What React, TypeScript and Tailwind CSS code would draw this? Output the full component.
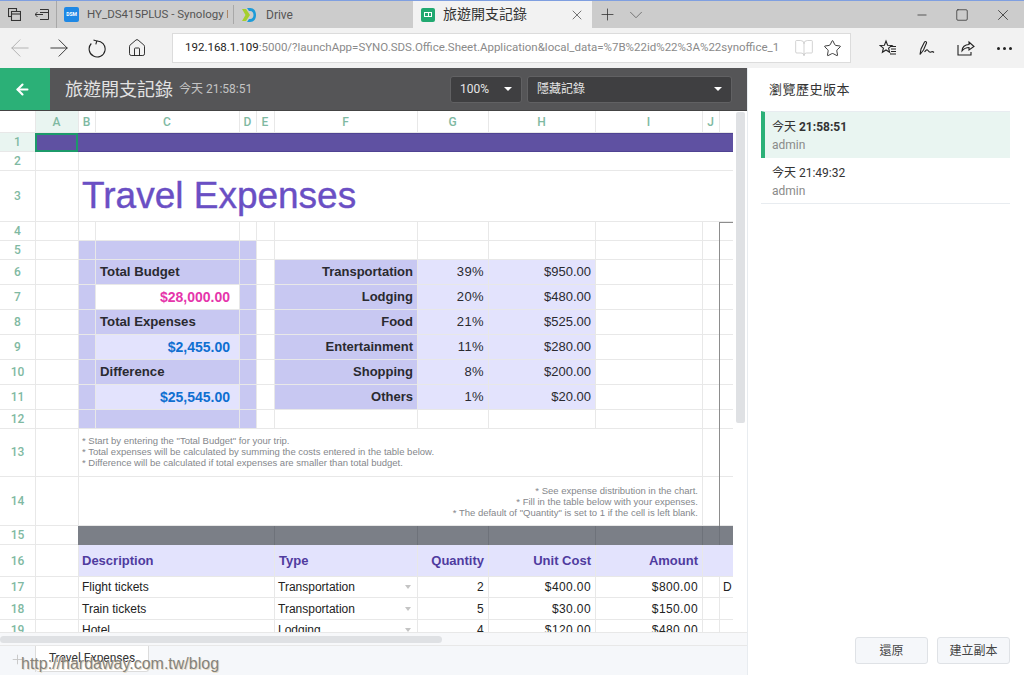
import type { ReactNode } from 'react';
import { ArrowLeft, ArrowRight, BookOpen, ChevronDown, House, Minus, Plus, Square, Star, X } from 'lucide-react';

const sans = "font-['Liberation_Sans','Noto_Sans_CJK_TC',sans-serif]";
const ui = "font-['Roboto','Noto_Sans_CJK_TC',sans-serif]";
const rowGrid =
  'grid grid-cols-[35px_43px_17px_144px_17px_18px_143px_71px_107px_107px_17px_14px] w-[733px]';

function Cell({ className = '', children }: { className?: string; children?: ReactNode }) {
  return (
    <div className={`min-w-0 overflow-hidden whitespace-nowrap flex items-center border-l border-b border-[#e8e8e8] ${className}`}>
      {children}
    </div>
  );
}

function RowHead({ n, active }: { n: number; active?: boolean }) {
  return (
    <div className={`flex items-center justify-center border-b border-[#e8e8e8] text-[12px] font-medium text-[#7fb9a2] ${ui} ${active ? 'bg-[#e9f5f1]' : ''}`}>
      {n}
    </div>
  );
}

const colLetters = ['A', 'B', 'C', 'D', 'E', 'F', 'G', 'H', 'I', 'J', ''];

const dark = 'bg-[#c8c8f2] border-[#bebee8]';
const light = 'bg-[#e3e3fd] border-[#d6d6f2]';
const band = 'bg-[#7b7f87] border-l border-[#6e727a]';

// budget block on the left, category table on the right
const budgetRows: { label?: string; value?: string; valueClass?: string; bg?: string; cat: string; pct: string; cost: string }[] = [
  { label: 'Total Budget', cat: 'Transportation', pct: '39%', cost: '$950.00' },
  { value: '$28,000.00', valueClass: 'text-[#e535ab]', bg: 'bg-white border-[#e8e8e8]', cat: 'Lodging', pct: '20%', cost: '$480.00' },
  { label: 'Total Expenses', cat: 'Food', pct: '21%', cost: '$525.00' },
  { value: '$2,455.00', valueClass: 'text-[#0f6fd1]', bg: light, cat: 'Entertainment', pct: '11%', cost: '$280.00' },
  { label: 'Difference', cat: 'Shopping', pct: '8%', cost: '$200.00' },
  { value: '$25,545.00', valueClass: 'text-[#0f6fd1]', bg: light, cat: 'Others', pct: '1%', cost: '$20.00' },
];

const expenses = [
  { h: 'h-[21px]', n: 17, d: 'Flight tickets', t: 'Transportation', q: '2', u: '$400.00', a: '$800.00', x: 'D' },
  { h: 'h-[22px]', n: 18, d: 'Train tickets', t: 'Transportation', q: '5', u: '$30.00', a: '$150.00', x: '' },
  { h: 'h-[21px]', n: 19, d: 'Hotel', t: 'Lodging', q: '4', u: '$120.00', a: '$480.00', x: '' },
];

function Sheet() {
  return (
    <div className={`h-[521px] overflow-hidden ${sans} text-[#2a2a30]`}>
      {/* column letters */}
      <div className={`${rowGrid} h-[22px]`}>
        <div className="border-b border-[#e8e8e8]" />
        {colLetters.map((c, i) => (
          <div
            key={i}
            className={`flex items-center justify-center pr-[1px] border-l border-b border-[#e8e8e8] text-[12px] font-medium text-[#7fb9a2] ${ui} ${c === 'A' ? 'bg-[#e9f5f1]' : ''}`}
          >
            {c}
          </div>
        ))}
      </div>

      <div className={`${rowGrid} h-[19px]`}>
        <RowHead n={1} active />
        <div className="bg-[#5f51a2] border-2 border-[#1c9a6a]" />
        <div className="col-span-10 bg-[#5f51a2] border-y border-[#4f4392]" />
      </div>
      <div className={`${rowGrid} h-[18px]`}>
        <RowHead n={2} />
        <Cell />
        <Cell className="col-span-10" />
      </div>
      <div className={`${rowGrid} h-[52px]`}>
        <RowHead n={3} />
        <Cell />
        <Cell className="col-span-10 pl-[3px] text-[37px] text-[#6a4fc4] [-webkit-text-stroke:0.4px_#6a4fc4]">Travel Expenses</Cell>
      </div>
      <div className={`${rowGrid} h-[19px]`}>
        <RowHead n={4} />
        {colLetters.map((c, i) => (
          <Cell key={i} />
        ))}
      </div>
      <div className={`${rowGrid} h-[19px]`}>
        <RowHead n={5} />
        <Cell />
        <Cell className={dark} />
        <Cell className={dark} />
        <Cell className={dark} />
        <Cell />
        <Cell />
        <Cell />
        <Cell />
        <Cell />
        <Cell />
        <Cell />
      </div>

      {budgetRows.map((r, i) => (
        <div key={i} className={`${rowGrid} h-[25px]`}>
          <RowHead n={6 + i} />
          <Cell />
          <Cell className={dark} />
          {r.label ? (
            <Cell className={`${dark} pl-[4px] text-[13.2px] font-bold`}>{r.label}</Cell>
          ) : (
            <Cell className={`${r.bg} justify-end pr-[9px] text-[14px] font-bold ${r.valueClass}`}>{r.value}</Cell>
          )}
          <Cell className={dark} />
          <Cell />
          <Cell className={`${dark} justify-end pr-[4px] text-[13px] font-bold`}>{r.cat}</Cell>
          <Cell className={`${light} justify-end pr-[4px] text-[13px] tracking-[0.4px]`}>{r.pct}</Cell>
          <Cell className={`${light} justify-end pr-[4px] text-[13px]`}>{r.cost}</Cell>
          <Cell />
          <Cell />
          <Cell />
        </div>
      ))}

      <div className={`${rowGrid} h-[18px]`}>
        <RowHead n={12} />
        <Cell />
        <Cell className={dark} />
        <Cell className={dark} />
        <Cell className={dark} />
        <Cell />
        <Cell />
        <Cell />
        <Cell />
        <Cell />
        <Cell />
        <Cell />
      </div>
      <div className={`${rowGrid} h-[49px]`}>
        <RowHead n={13} />
        <Cell />
        <Cell className="col-span-8 pl-[3px] text-[9.5px] leading-[11px] text-[#85878c]">
          <div className="pb-[2px]">
            <div>* Start by entering the "Total Budget" for your trip.</div>
            <div>* Total expenses will be calculated by summing the costs entered in the table below.</div>
            <div>* Difference will be calculated if total expenses are smaller than total budget.</div>
          </div>
        </Cell>
        <Cell />
        <Cell />
      </div>
      <div className={`${rowGrid} h-[49px]`}>
        <RowHead n={14} />
        <Cell />
        <Cell className="col-span-8 justify-end pr-[4px] text-[9.5px] leading-[11px] text-[#85878c] text-right">
          <div className="pt-[1px]">
            <div>* See expense distribution in the chart.</div>
            <div>* Fill in the table below with your expenses.</div>
            <div>* The default of "Quantity" is set to 1 if the cell is left blank.</div>
          </div>
        </Cell>
        <Cell />
        <Cell />
      </div>
      <div className={`${rowGrid} h-[19px]`}>
        <RowHead n={15} />
        <Cell />
        <div className="col-span-4 bg-[#7b7f87]" />
        <div className={band} />
        <div className={band} />
        <div className={band} />
        <div className={band} />
        <div className={band} />
        <div className={band} />
      </div>
      <div className={`${rowGrid} h-[32px] text-[13px] font-bold text-[#4f3b9f]`}>
        <RowHead n={16} />
        <Cell />
        <Cell className={`col-span-4 ${light} pl-[3px]`}>Description</Cell>
        <Cell className={`${light} pl-[4px]`}>Type</Cell>
        <Cell className={`${light} justify-end pr-[4px]`}>Quantity</Cell>
        <Cell className={`${light} justify-end pr-[4px]`}>Unit Cost</Cell>
        <Cell className={`${light} justify-end pr-[4px]`}>Amount</Cell>
        <Cell className={`col-span-2 ${light}`} />
      </div>
      {expenses.map((r) => (
        <div key={r.n} className={`${rowGrid} ${r.h} text-[12px] text-[#222]`}>
          <RowHead n={r.n} />
          <Cell />
          <Cell className="col-span-4 pl-[3px]">{r.d}</Cell>
          <Cell className="pl-[3px] justify-between pr-[6px]">
            <span>{r.t}</span>
            <span className="border-x-[3.5px] border-t-[4px] border-x-transparent border-t-[#c4c4c4]" />
          </Cell>
          <Cell className="justify-end pr-[4px] tracking-[0.4px]">{r.q}</Cell>
          <Cell className="justify-end pr-[4px] tracking-[0.4px]">{r.u}</Cell>
          <Cell className="justify-end pr-[4px] tracking-[0.4px]">{r.a}</Cell>
          <Cell />
          <Cell className="pl-[3px]">{r.x}</Cell>
        </div>
      ))}
    </div>
  );
}

function ToolButton({ children }: { children: ReactNode }) {
  return <div className="w-[39px] flex items-center justify-center">{children}</div>;
}

function BrowserChrome() {
  return (
    <>
      {/* tab strip */}
      <div className={`h-[28px] shrink-0 flex items-stretch bg-[#cccccc] border-t border-[#7f9fe0] text-[12px] text-[#555] ${ui}`}>
        <div className="w-[57px] flex items-center gap-[14px] pl-[8px] border-r border-[#a8a8a8] text-[#333]">
          <svg width="13" height="13" viewBox="0 0 13 13" fill="none" stroke="currentColor" strokeWidth="1.1">
            <rect x="0.5" y="0.5" width="8" height="8" />
            <rect x="3.5" y="3.5" width="9" height="9" fill="#ccc" />
            <path d="M3.5 6h9" />
          </svg>
          <svg width="14" height="11" viewBox="0 0 14 11" fill="none" stroke="currentColor" strokeWidth="1">
            <path d="M5 .5h8.500v10H5M5 3.500h8.500M0 5.500h8M2.500 3 0 5.500 2.500 8" />
          </svg>
        </div>
        <div className="w-[177px] flex items-center pl-[7px] border-r border-[#a8a8a8] my-[4px]">
          <span className="w-[15px] h-[15px] rounded-[2px] bg-[#1e88e5] text-white text-[5px] font-bold flex items-center justify-center shrink-0">DSM</span>
          <span className="ml-[8px] w-[141px] overflow-hidden whitespace-nowrap text-[11.5px]">HY_DS415PLUS - Synology DiskStation</span>
        </div>
        <div className="w-[179px] flex items-center pl-[7px]">
          <svg width="16" height="16" viewBox="0 0 16 16">
            <path d="M1 2h4l4 6-4 6H1l3.500-6z" fill="#a5cf2f" />
            <path d="M6 1h3c4 0 6 3 6 7s-2 7-6 7H6l2-3h1c2.500 0 3.500-2 3.500-4S11.500 4 9 4H8z" fill="#1d9bd8" />
          </svg>
          <span className="ml-[9px]">Drive</span>
        </div>
        <div className="w-[179px] bg-[#f2f2f2] flex items-center pl-[8px] text-[#333]">
          <span className="w-[14px] h-[14px] rounded-[2px] bg-[#21a971] flex items-center justify-center shrink-0">
            <span className="w-[8px] h-[5px] border border-white bg-[linear-gradient(white,white)] bg-[length:1px_100%] bg-center bg-no-repeat" />
          </span>
          <span className="ml-[8px] flex-1 text-[14px]">旅遊開支記錄</span>
          <X size={16} strokeWidth={1.1} className="mr-[7px] text-[#444]" />
        </div>
        <div className="w-[30px] flex items-center justify-center">
          <Plus size={19} strokeWidth={1} className="text-[#333]" />
        </div>
        <div className="w-[27px] flex items-center justify-center">
          <ChevronDown size={22} strokeWidth={0.8} className="text-[#555]" />
        </div>
        <div className="flex-1 flex items-center justify-end text-[#222]">
          <div className="w-[40px] flex justify-center"><Minus size={14} strokeWidth={1.2} /></div>
          <div className="w-[40px] flex justify-center"><Square size={14} strokeWidth={1.2} /></div>
          <div className="w-[42px] flex justify-center"><X size={18} strokeWidth={1} /></div>
        </div>
      </div>

      {/* address bar */}
      <div className="h-[40px] shrink-0 flex items-center bg-[#f2f2f2] text-[#222]">
        <div className="w-[172px] flex items-center">
          <ToolButton><ArrowLeft size={28} strokeWidth={0.75} className="text-[#aaa]" /></ToolButton>
          <ToolButton><ArrowRight size={28} strokeWidth={0.75} /></ToolButton>
          <ToolButton>
            <svg width="19" height="19" viewBox="0 0 19 19" fill="none" stroke="currentColor" strokeWidth="1.1">
              <path d="M5.500 1l3.300 1-1 3.300" />
              <path d="M8.500 2A8 8 0 1 1 3.300 4.500" />
            </svg>
          </ToolButton>
          <ToolButton><House size={20} strokeWidth={1.1} /></ToolButton>
        </div>
        <div className={`w-[679px] h-[30px] flex items-center bg-white border border-[#dcdcdc] pl-[12px] text-[11.5px] ${ui}`}>
          <span className="w-[594px] overflow-hidden whitespace-nowrap text-[#8a8a8a]">
            <span className="text-[#222]">192.168.1.109</span>:5000/?launchApp=SYNO.SDS.Office.Sheet.Application&amp;local_data=%7B%22id%22%3A%22synoffice_1d3f8a2b
          </span>
          <BookOpen size={20} strokeWidth={0.9} className="ml-[15px] text-[#c4c4c4]" />
          <Star size={19} strokeWidth={1.1} className="ml-[9px]" />
        </div>
        <div className="flex-1 flex items-center pl-[17px]">
          <ToolButton>
            <svg width="18" height="18" viewBox="0 0 18 18" fill="none" stroke="currentColor" strokeWidth="1.1">
              <path d="M7 2l1.600 4.200 4.400.2-3.400 2.700 1 4.200L7 11l-3.600 2.300 1-4.200L1 6.400l4.400-.2zM11 7.500h6M12 10h5M12 12.500h5M11 15h6" />
            </svg>
          </ToolButton>
          <ToolButton>
            <svg width="18" height="18" viewBox="0 0 18 18" fill="none" stroke="currentColor" strokeWidth="1.1">
              <path d="M2 15.500 3 10l3.500-7c.7-1 2.500-.2 2 1l-3 7zM6.500 13c1.500-2 2.500-3 3.500-1.500s2 2 3 1.500 2-.5 3 .5" />
            </svg>
          </ToolButton>
          <ToolButton>
            <svg width="18" height="18" viewBox="0 0 18 18" fill="none" stroke="currentColor" strokeWidth="1.1">
              <path d="M1 6v10h13v-3" />
              <path d="M5 12c0-4 3-6.500 7-6.500V3l5 4.500L12 11V8.500c-3 0-5 1-7 3.500z" />
            </svg>
          </ToolButton>
          <ToolButton>
            <div className="flex gap-[3px]">
              <span className="w-[3px] h-[3px] bg-[#222] rounded-full" />
              <span className="w-[3px] h-[3px] bg-[#222] rounded-full" />
              <span className="w-[3px] h-[3px] bg-[#222] rounded-full" />
            </div>
          </ToolButton>
        </div>
      </div>
    </>
  );
}

function Picker({ className, children }: { className: string; children: ReactNode }) {
  return (
    <div className={`h-[27px] flex items-center justify-between px-[9px] bg-[#3f3f41] border border-[#616163] rounded-[3px] text-[12px] text-[#e6e6e6] ${className}`}>
      <span>{children}</span>
      <span className="border-x-[4px] border-t-[4px] border-x-transparent border-t-white" />
    </div>
  );
}

export default function App() {
  return (
    <div className={`relative w-[1024px] h-[675px] overflow-hidden flex flex-col bg-white ${ui}`}>
      <BrowserChrome />
      <div className="flex-1 flex min-h-0">
        <div className="w-[747px] flex flex-col">
          {/* document header */}
          <div className="h-[43px] shrink-0 flex items-stretch bg-[#555557] border-b border-[#444]">
            <div className="w-[50px] flex items-center pl-[14px] bg-[#2bb077]">
              <ArrowLeft size={17} strokeWidth={3} className="text-white" />
            </div>
            <div className="flex-1 flex items-center pl-[15px] pr-[15px]">
              <span className="text-[18px] text-[#e2e2e2]">旅遊開支記錄</span>
              <span className="ml-[6px] text-[12px] text-[#c4c4c4]">今天 21:58:51</span>
              <Picker className="ml-auto w-[72px]">100%</Picker>
              <Picker className="ml-[5px] w-[205px]">隱藏記錄</Picker>
            </div>
          </div>

          <div className="relative flex">
            <Sheet />
            {/* chart frame */}
            <div className="absolute left-[719px] top-[111px] w-[14px] h-[304px] border-l border-t border-[#8d8d8d]" />
            {/* vertical scrollbar */}
            <div className="w-[14px] h-[521px] flex justify-center pt-[1px] bg-white">
              <div className="w-[9px] h-[311px] bg-[#dfe1e4] rounded-[2px]" />
            </div>
          </div>

          {/* horizontal scrollbar */}
          <div className="h-[14px] shrink-0 bg-[#f7f8fa] border-y border-[#e8e8e8]">
            <div className="w-[442px] h-[7px] mt-[3px] bg-[#dfe1e4] rounded-[4px]" />
          </div>

          {/* sheet tabs */}
          <div className={`flex-1 flex items-start bg-[#f5f7fa] ${ui} text-[12px] text-[#333]`}>
            <div className="w-[36px] h-[26px] flex items-center justify-center border-r border-[#dcdcdc]">
              <Plus size={15} strokeWidth={1.5} className="text-[#c6c6c6]" />
            </div>
            <div className="w-[113px] h-[26px] flex items-start pt-[5px] leading-[14px] justify-center bg-white border-r border-b border-[#dcdcdc] rounded-b-[3px]">
              Travel Expenses
            </div>
          </div>
        </div>

        {/* version history */}
        <aside className="flex-1 flex flex-col border-l border-[#e8ecf0] pl-[13px] pr-[14px]">
          <div className="h-[43px] flex items-center pl-[8px] text-[13px] text-[#333] tracking-[0.5px]">瀏覽歷史版本</div>
          <div className="h-[47px] flex flex-col justify-center bg-[#e9f5f1] border-l-[4px] border-[#2bb077] border-t border-t-[#e8ecf0] pl-[7px] pt-[2px]">
            <div className="text-[12px] text-[#333]">今天 <span className="font-bold">21:58:51</span></div>
            <div className="text-[12px] text-[#8a8a8a]">admin</div>
          </div>
          <div className="h-[46px] flex flex-col justify-center border-b border-[#e8ecf0] pl-[11px] pt-[2px]">
            <div className="text-[12px] text-[#333]">今天 21:49:32</div>
            <div className="text-[12px] text-[#8a8a8a]">admin</div>
          </div>
          <div className="mt-auto mb-[11px] flex justify-end gap-[9px] text-[12px] text-[#444]">
            <button className="w-[73px] h-[27px] bg-[#f5f7fa] border border-[#dfe2e6] rounded-[3px]">還原</button>
            <button className="w-[73px] h-[27px] bg-[#f5f7fa] border border-[#dfe2e6] rounded-[3px]">建立副本</button>
          </div>
        </aside>
      </div>

      {/* blog watermark stamped over the capture */}
      <div className={`absolute left-[21px] top-[654px] text-[16px] leading-[20px] text-[#85827c] [text-shadow:1px_1px_0_#e8dcc4] ${sans}`}>
        http://hardaway.com.tw/blog
      </div>
    </div>
  );
}
